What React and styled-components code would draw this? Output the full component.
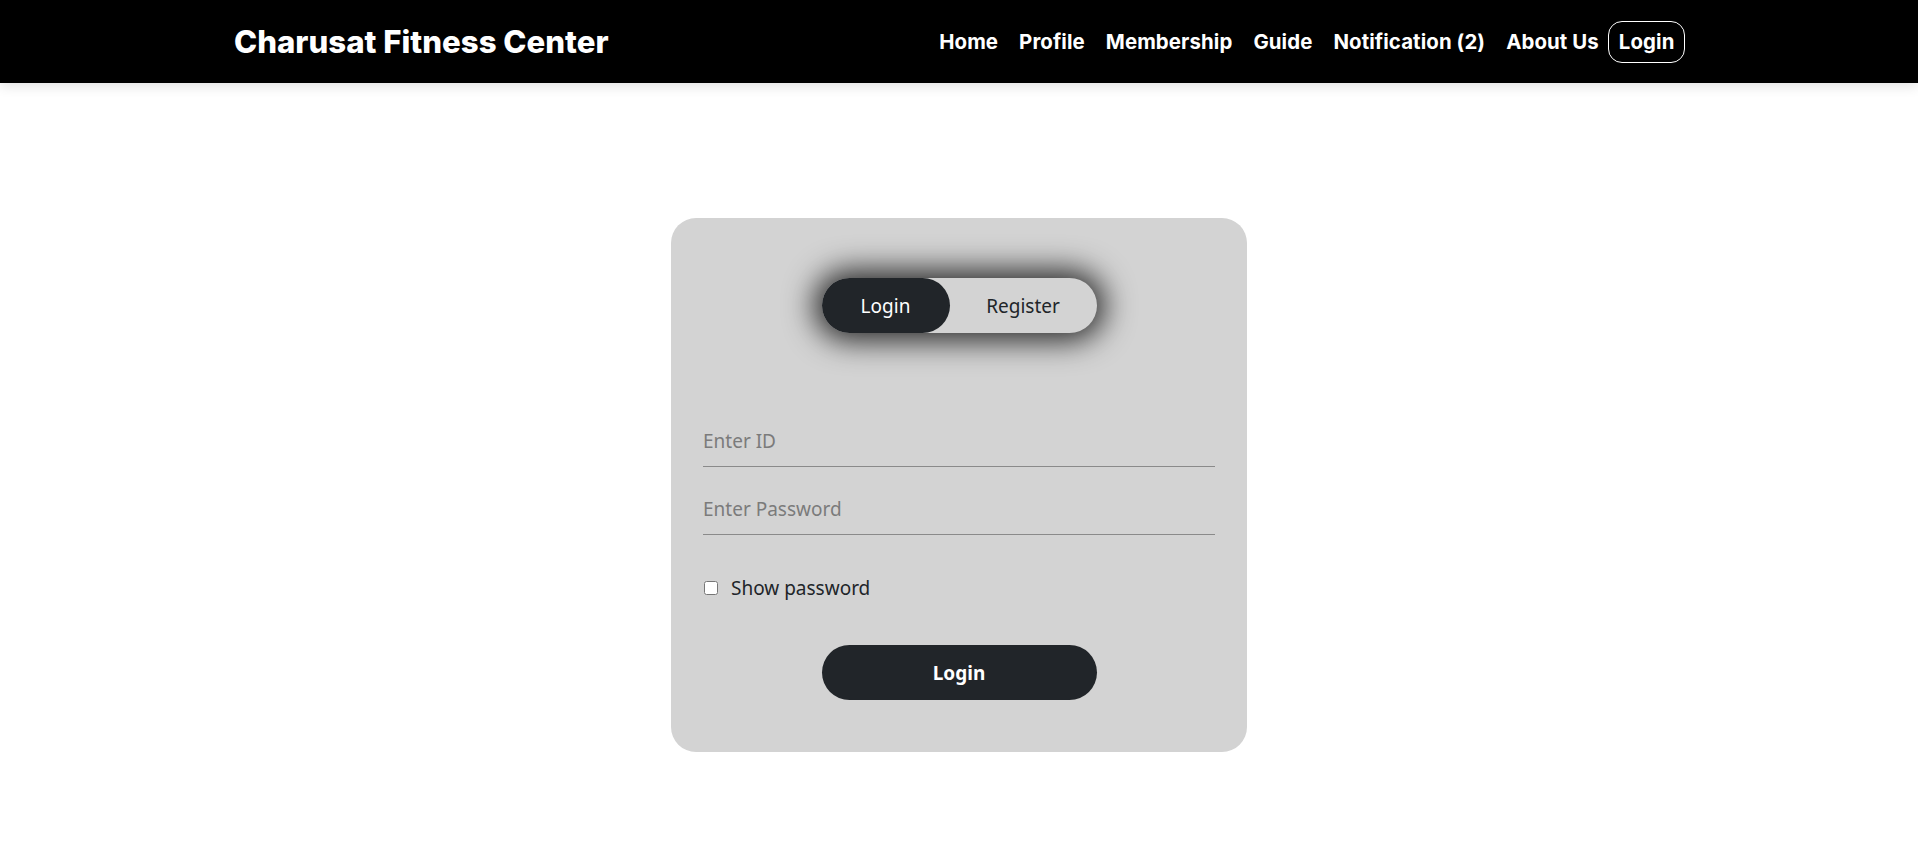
import React, { useState } from "react";
import styled, { createGlobalStyle } from "styled-components";

const GlobalStyle = createGlobalStyle`
  * { box-sizing: border-box; }
  body {
    margin: 0;
    background: #fff;
    font-family: "Noto Sans", "Open Sans", sans-serif;
    color: #212529;
  }
`;

const Header = styled.header`
  background: #000;
  height: 83px;
  box-shadow: 0 3px 12px rgba(0, 0, 0, 0.12);
`;

const HeaderInner = styled.div`
  max-width: 1450px;
  height: 100%;
  margin: 0 auto;
  display: flex;
  align-items: center;
  justify-content: space-between;
`;

const Brand = styled.a`
  font-family: "Inter", sans-serif;
  font-weight: 800;
  font-size: 31.2px;
  color: #fff;
  text-decoration: none;
`;

const Nav = styled.nav`
  display: flex;
  align-items: center;
  margin-right: -1px;
`;

const NavLink = styled.a`
  font-family: "Inter", sans-serif;
  font-weight: 700;
  font-size: 20.4px;
  letter-spacing: 0.1px;
  color: #fff;
  text-decoration: none;
  padding: 0 9.5px;
  line-height: 40px;
  border: 1px solid ${(p) => (p.$boxed ? "#fff" : "transparent")};
  border-radius: 14px;
  margin-left: ${(p) => (p.$boxed ? "-1px" : "0")};
`;

const Main = styled.main`
  display: flex;
  justify-content: center;
  padding-top: 135px;
`;

const Card = styled.div`
  width: 576px;
  background: #d3d3d3;
  border-radius: 25px;
  padding: 60px 32px 52px;
  display: flex;
  flex-direction: column;
`;

const Toggle = styled.div`
  align-self: center;
  display: flex;
  width: 275px;
  height: 55px;
  border-radius: 28px;
  background: #d3d3d3;
  box-shadow: 0 0 30px 8px rgba(0, 0, 0, 0.8);
`;

const ToggleButton = styled.button`
  flex: ${(p) => (p.$active ? "0 0 128px" : "1")};
  border: none;
  border-radius: 28px;
  background: ${(p) => (p.$active ? "#212529" : "transparent")};
  color: ${(p) => (p.$active ? "#fff" : "#212529")};
  font-family: "Noto Sans", sans-serif;
  font-size: 19px;
  cursor: pointer;
  padding: 0;
`;

const Form = styled.form`
  display: flex;
  flex-direction: column;
  margin-top: 92px;
`;

const Input = styled.input`
  width: 100%;
  border: none;
  border-bottom: 1px solid #8a8a8a;
  background: transparent;
  font-family: "Noto Sans", sans-serif;
  font-size: 19px;
  line-height: 26px;
  padding: 3px 0 12px;
  margin-bottom: ${(p) => p.$gap || "0"};
  color: #212529;
  outline: none;
  &::placeholder {
    color: #7b7b7b;
  }
`;

const CheckRow = styled.label`
  display: flex;
  align-items: center;
  gap: 13px;
  margin-top: 40px;
  font-size: 19px;
  color: #212529;
  cursor: pointer;
`;

const Check = styled.input`
  width: 14px;
  height: 14px;
  margin: 0 0 0 1px;
`;

const Submit = styled.button`
  align-self: center;
  width: 275px;
  height: 55px;
  margin-top: 44px;
  border: none;
  border-radius: 28px;
  background: #212529;
  color: #fff;
  font-family: "Noto Sans", sans-serif;
  font-weight: 700;
  font-size: 19px;
  cursor: pointer;
`;

const links = ["Home", "Profile", "Membership", "Guide", "Notification (2)", "About Us"];

export default function App() {
  const [mode, setMode] = useState("login");
  const [show, setShow] = useState(false);

  return (
    <>
      <GlobalStyle />
      <Header>
        <HeaderInner>
          <Brand href="#">Charusat Fitness Center</Brand>
          <Nav>
            {links.map((l) => (
              <NavLink key={l} href="#">{l}</NavLink>
            ))}
            <NavLink href="#" $boxed>Login</NavLink>
          </Nav>
        </HeaderInner>
      </Header>
      <Main>
        <Card>
          <Toggle>
            <ToggleButton $active={mode === "login"} onClick={() => setMode("login")}>Login</ToggleButton>
            <ToggleButton $active={mode === "register"} onClick={() => setMode("register")}>Register</ToggleButton>
          </Toggle>
          <Form onSubmit={(e) => e.preventDefault()}>
            <Input type="text" placeholder="Enter ID" $gap="26px" />
            <Input type={show ? "text" : "password"} placeholder="Enter Password" />
            <CheckRow>
              <Check type="checkbox" checked={show} onChange={() => setShow(!show)} />
              Show password
            </CheckRow>
            <Submit type="submit">Login</Submit>
          </Form>
        </Card>
      </Main>
    </>
  );
}
